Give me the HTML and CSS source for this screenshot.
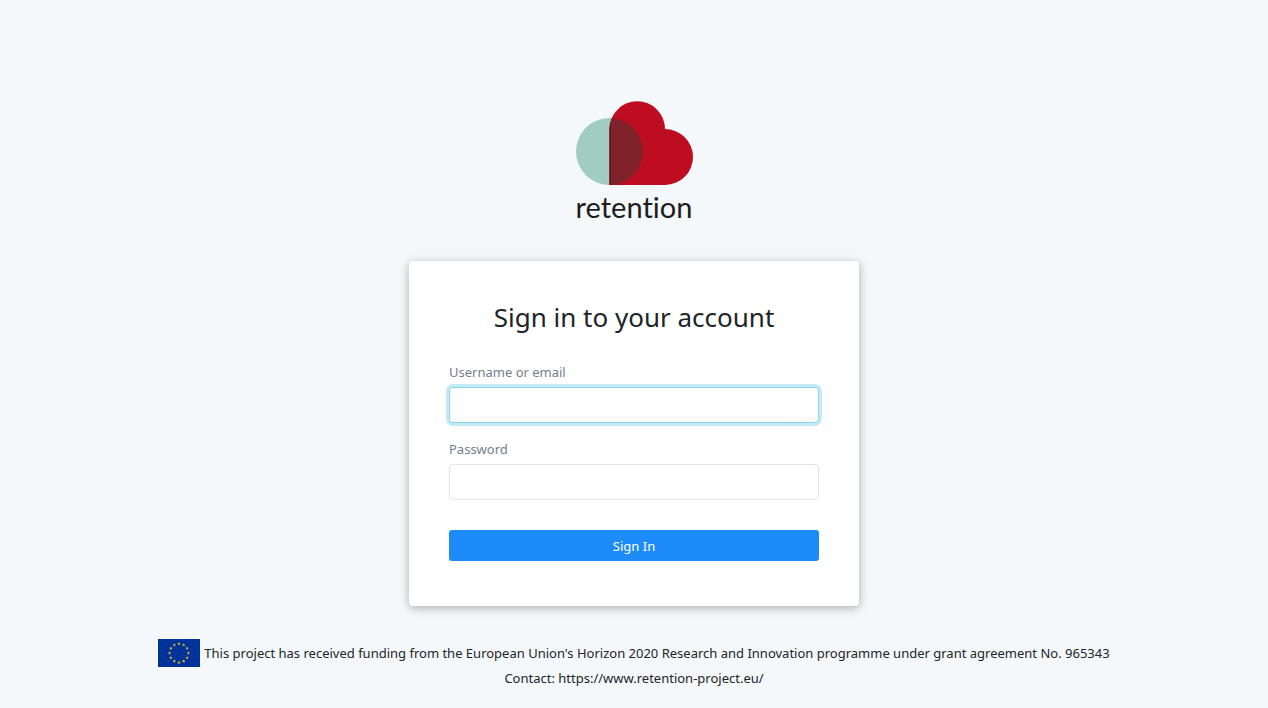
FILE: index.html
```html
<!DOCTYPE html>
<html lang="en">
<head>
<meta charset="utf-8">
<meta name="viewport" content="width=device-width, initial-scale=1">
<title>Sign in to your account</title>
<link rel="stylesheet" href="styles.css">
</head>
<body>
<header class="brand">
  <svg class="brand-logo" viewBox="0 0 140 130" role="img" aria-label="retention">
    <defs>
      <clipPath id="cloud"><path d="M45.500 95V39A27.700 27.700 0 0 1 101 39A28 28 0 0 1 101 95Z"/></clipPath>
    </defs>
    <circle cx="45.500" cy="61.500" r="33.500" fill="#a1ccc1"/>
    <path d="M45.500 95V39A27.700 27.700 0 0 1 101 39A28 28 0 0 1 101 95Z" fill="#be0c21"/>
    <g clip-path="url(#cloud)">
      <circle cx="45.500" cy="61.500" r="33.500" fill="#802229"/>
      <path d="M46 29V95" stroke="#3d0a10" stroke-width="1"/>
    </g>
    <text class="brand-name" x="70" y="128" text-anchor="middle">retention</text>
  </svg>
</header>
<main class="card">
  <h1 class="title">Sign in to your account</h1>
  <form class="form">
    <div class="field">
      <label class="label" for="username">Username or email</label>
      <input class="input input-active" id="username" name="username" type="text">
    </div>
    <div class="field">
      <label class="label" for="password">Password</label>
      <input class="input" id="password" name="password" type="password">
    </div>
    <button class="submit" type="submit">Sign In</button>
  </form>
</main>
<footer class="footer">
  <div class="funding">
    <svg class="flag" viewBox="0 0 42 28" role="img" aria-label="European Union flag">
      <defs><path id="star" fill="#f0c020" d="M0-1.700.500-.500 1.700-.500.700.300 1.100 1.500 0 .800-1.100 1.500-.700.300-1.700-.500-.500-.500Z"/></defs>
      <path fill="#003399" d="M0 0h42v28H0z"/>
      <use href="#star" x="21" y="4.700"/><use href="#star" x="25.700" y="5.900"/><use href="#star" x="29.100" y="9.300"/>
      <use href="#star" x="30.400" y="14"/><use href="#star" x="29.100" y="18.700"/><use href="#star" x="25.700" y="22.100"/>
      <use href="#star" x="21" y="23.400"/><use href="#star" x="16.300" y="22.100"/><use href="#star" x="12.900" y="18.700"/>
      <use href="#star" x="11.600" y="14"/><use href="#star" x="12.900" y="9.300"/><use href="#star" x="16.300" y="5.900"/>
    </svg>
    <span>This project has received funding from the European Union's Horizon 2020 Research and Innovation programme under grant agreement No. 965343</span>
  </div>
  <div>Contact: https://www.retention-project.eu/</div>
</footer>
</body>
</html>
```
FILE: styles.css
```css
* { box-sizing: border-box; }

body {
  margin: 0;
  padding: 90px 16px 16px;
  background: #f4f8fb;
  color: #212529;
  font-family: "Segoe UI", "Noto Sans", sans-serif;
  font-size: 13px;
  line-height: 20px;
}

.brand { display: flex; justify-content: center; }

.brand-logo { width: 140px; height: 130px; overflow: visible; }

.brand-name {
  font: 29px Lato, sans-serif;
  font-variant-ligatures: none;
  fill: #1d1d1b;
}

.card {
  max-width: 450px;
  margin: 41px auto 0;
  padding: 36px 40px 45px;
  background: #fff;
  border-radius: 4px;
  box-shadow: 0 2px 10px rgba(0, 0, 0, 0.3);
}

.title {
  margin: 0 0 25px;
  font-size: 26px;
  font-weight: 400;
  line-height: 40px;
  text-align: center;
}

.form { display: flex; flex-direction: column; }

.field { display: flex; flex-direction: column; gap: 5px; margin-bottom: 16px; }

.label { color: #72808d; }

.input {
  width: 100%;
  height: 36px;
  padding: 6px 12px;
  border: 1px solid #e3e3e3;
  border-radius: 4px;
  background: #fff;
  color: inherit;
  font: inherit;
  outline: 0;
}

.input-active,
.input:focus {
  border-color: #8ad4ee;
  box-shadow: 0 0 0 3px #c5e9f6;
}

.submit {
  height: 31px;
  margin-top: 14px;
  border: 0;
  border-radius: 3px;
  background: #1e8bfa;
  color: #fff;
  font: inherit;
  cursor: pointer;
}

.footer { margin-top: 33px; text-align: center; }

.funding {
  display: flex;
  justify-content: center;
  align-items: center;
  gap: 4px;
  margin-bottom: 1px;
}

.flag { flex: none; width: 42px; height: 28px; }
```
